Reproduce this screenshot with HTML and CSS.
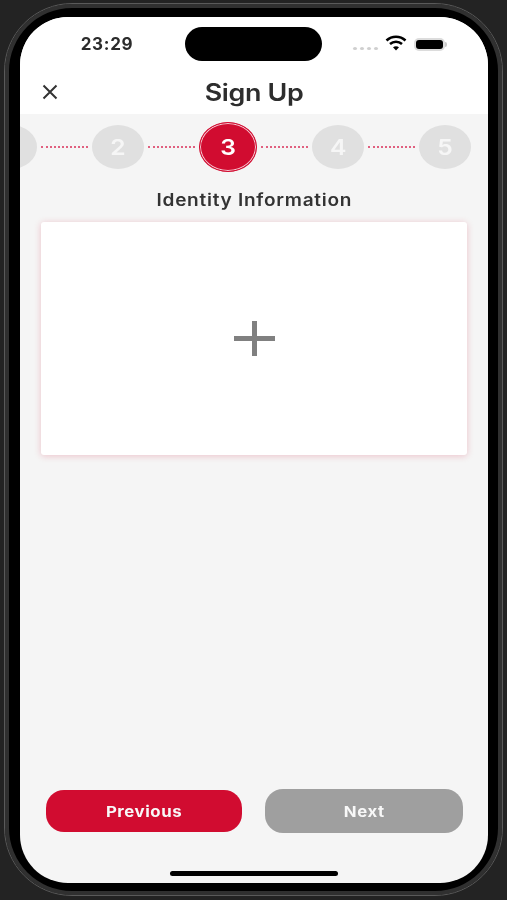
FILE: index.html
```html
<!DOCTYPE html>
<html lang="en">
<head>
    <meta charset="UTF-8">
    <title>Sign Up</title>
    <link rel="stylesheet" href="styles.css">
</head>
<body>
<div class="device">
    <div class="screen">
        <!-- status bar and title -->
        <div class="top">
            <div class="status">
                <span class="time">23:29</span>
                <div class="island"></div>
                <div class="signal">
                    <span class="dot"></span><span class="dot"></span><span class="dot"></span><span class="dot"></span>
                </div>
                <svg class="wifi" width="22" height="16" viewBox="0 0 22 16">
                    <path d="M1.5 5.5 C7 0.5 15 0.5 20.500 5.500" fill="none" stroke="#000" stroke-width="2.600"/>
                    <path d="M5 9 C8.500 6 13.500 6 17 9" fill="none" stroke="#000" stroke-width="2.600"/>
                    <path d="M8 12.300 L11 15.500 L14 12.300 C12.200 10.900 9.800 10.900 8 12.300 Z" fill="#000"/>
                </svg>
                <div class="battery"><div class="battery-fill"></div></div>
                <div class="battery-tip"></div>
            </div>
            <div class="title-row">
                <svg class="close" width="18" height="18" viewBox="0 0 18 18">
                    <path d="M2.500 2.500 L15.500 15.500 M15.500 2.500 L2.500 15.500" fill="none" stroke="#333" stroke-width="2"/>
                </svg>
                <h1 class="title"><span class="wide">Sign Up</span></h1>
            </div>
        </div>

        <div class="content">
            <div class="stepper">
                <div class="step"></div>
                <div class="line"></div>
                <div class="step"><span class="wide">2</span></div>
                <div class="line"></div>
                <div class="step active"><span class="wide">3</span></div>
                <div class="line"></div>
                <div class="step"><span class="wide">4</span></div>
                <div class="line"></div>
                <div class="step"><span class="wide">5</span></div>
            </div>

            <h2 class="section"><span class="wide">Identity Information</span></h2>

            <div class="upload">
                <div class="plus"></div>
            </div>

            <div class="buttons">
                <button class="btn btn-prev"><span class="wide">Previous</span></button>
                <button class="btn btn-next"><span class="wide">Next</span></button>
            </div>

            <div class="home"></div>
        </div>
    </div>
</div>
</body>
</html>
```

FILE: styles.css
```css
* {box-sizing:border-box;}
html, body {margin:0;padding:0;height:900px;overflow:hidden;}
body {background:#232323;padding:3px 4px 4px;font-family:"Inter", "Liberation Sans", sans-serif;}

/* the reference is a slightly stretched, soft video frame */
.device {height:893px;border:1px solid #5a5a5a;border-radius:68px;background:#000;box-shadow:inset 0 0 0 4px #303030;padding:13px 14px 12px 15px;filter:blur(0.5px);}
.screen {height:866px;border-radius:48px;overflow:hidden;background:#f5f5f5;display:flex;flex-direction:column;}
.wide {display:inline-block;transform:scaleX(1.12);}

.top {height:97px;background:#fff;flex:none;}
.status {display:flex;align-items:center;height:54px;}
.time {width:54px;margin-left:60px;font-size:17px;font-weight:700;color:#2b2b2b;text-align:center;letter-spacing:0.7px;}
.island {width:137px;height:34px;margin:0 0 0 51px;background:#000;border-radius:17px;}
.signal {display:flex;gap:3px;margin:9px 0 0 31px;}
.dot {width:4px;height:3px;border-radius:50%;background:#cfcfcf;}
.wifi {margin-left:7px;margin-top:-3px;}
.battery {width:31px;height:13px;margin-left:7px;padding:2px;border-radius:5px;background:#dcdcdc;}
.battery-fill {height:100%;background:#000;border-radius:3px;}
.battery-tip {width:2px;height:5px;background:#c8c8c8;border-radius:0 2px 2px 0;}

.title-row {position:relative;height:43px;display:flex;align-items:center;justify-content:center;}
.close {position:absolute;left:21px;top:12px;}
.title {margin:0;font-size:24px;font-weight:600;color:#2d2d2d;letter-spacing:-0.3px;}

.content {flex:1;display:flex;flex-direction:column;}

.stepper {display:flex;align-items:center;gap:4px;height:66px;margin-left:-35px;flex:none;}
.step {width:52px;height:44px;flex:none;display:flex;align-items:center;justify-content:center;border-radius:50%;background:#e0e0e0;color:#f6f6f6;font-size:22px;font-weight:600;}
.step.active {width:58px;height:50px;background:#d10c30;color:#fff;border:1px solid #d10c30;box-shadow:inset 0 0 0 1px #f6c9d3;}
.line {width:47px;flex:none;border-top:2px dotted #e0607f;}

.section {margin:10px 0 0;font-size:17px;font-weight:600;line-height:20px;color:#333;text-align:center;letter-spacing:0.65px;}

.upload {height:233px;margin:12px 21px 0;background:#fff;border-radius:3px;box-shadow:0 1px 7px rgba(209, 12, 48, 0.22);display:flex;align-items:center;justify-content:center;}
.plus {position:relative;width:41px;height:35px;}
.plus::before {content:"";position:absolute;left:0;right:0;top:15px;height:5px;background:#808080;}
.plus::after {content:"";position:absolute;top:0;bottom:0;left:18px;width:5px;background:#808080;}

.buttons {display:flex;align-items:center;gap:23px;margin:334px 25px 0 26px;}
.btn {border:none;font-family:inherit;font-size:15px;font-weight:700;color:#f8f8f8;letter-spacing:0.5px;border-radius:18px;}
.btn-prev {width:196px;height:42px;background:#d10c30;}
.btn-next {width:198px;height:44px;background:#9f9f9f;}

.home {width:168px;height:5px;margin:38px auto 0;background:#000;border-radius:3px;}
```
